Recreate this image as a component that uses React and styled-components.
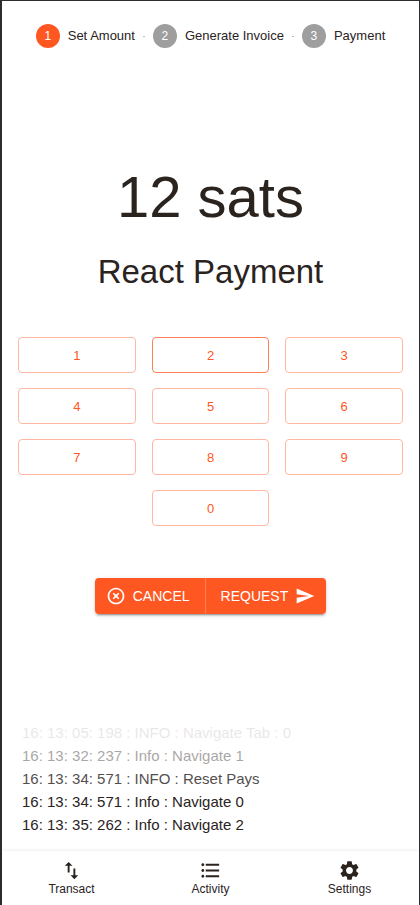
import React, { useState } from "react";
import styled, { createGlobalStyle } from "styled-components";
import {
  MdFormatListBulleted,
  MdHighlightOff,
  MdImportExport,
  MdSend,
  MdSettings,
} from "react-icons/md";

const orange = "#ff5722";
const ink = "#2a231e";

const GlobalStyle = createGlobalStyle`
  *, *::before, *::after { box-sizing: border-box; }
  body {
    margin: 0;
    background: #fff;
    color: ${ink};
    font-family: "Liberation Sans", Arial, sans-serif;
  }
  button { font-family: inherit; cursor: pointer; }
`;

const Screen = styled.div`
  display: flex;
  flex-direction: column;
  min-height: 100vh;
  border: solid #2d2d2f;
  border-width: 1px 1px 0 2px;
`;

const Main = styled.main`
  flex: 1;
  display: flex;
  flex-direction: column;
  padding: 23px 16px 0 16px;
`;

const Stepper = styled.ol`
  display: flex;
  align-items: center;
  justify-content: center;
  margin: 0;
  padding: 0;
  list-style: none;
`;

const Step = styled.li`
  display: flex;
  align-items: center;
  gap: 8px;
  font-size: 13px;
  line-height: 24px;
  white-space: nowrap;

  & + &::before {
    content: "";
    width: 2px;
    height: 1px;
    margin-left: 8px;
    background: #bdbdbd;
  }
`;

const StepNumber = styled.span`
  width: 24px;
  height: 24px;
  border-radius: 50%;
  background: ${({ $active }) => ($active ? orange : "#9e9e9e")};
  color: #fff;
  font-size: 12px;
  text-align: center;
`;

const Summary = styled.header`
  display: flex;
  flex-direction: column;
  align-items: center;
  gap: 21px;
  margin-top: 115px;
`;

const Amount = styled.h1`
  margin: 0;
  font-size: 58px;
  font-weight: 400;
  line-height: 68px;
`;

const Memo = styled.h2`
  margin: 0;
  font-size: 33px;
  font-weight: 400;
  line-height: 40px;
`;

const Keypad = styled.div`
  display: grid;
  grid-template-columns: repeat(3, 1fr);
  gap: 15px 16px;
  margin-top: 45px;
`;

const Key = styled.button`
  height: 36px;
  padding: 0;
  border: 1px solid ${({ $focused }) => ($focused ? "#ff7e57" : "#ffb7a2")};
  border-radius: 4px;
  background: transparent;
  color: ${orange};
  font-size: 13px;

  &:last-child {
    grid-column: 2;
  }
`;

const Actions = styled.div`
  display: flex;
  align-self: center;
  margin-top: 52px;
  border-radius: 4px;
  box-shadow: 0 3px 1px -2px rgba(0, 0, 0, 0.2),
    0 2px 2px rgba(0, 0, 0, 0.14), 0 1px 5px rgba(0, 0, 0, 0.12);
`;

const Action = styled.button`
  display: flex;
  align-items: center;
  gap: 7px;
  height: 36px;
  padding: 0 ${({ $last }) => ($last ? "11px 0 15px" : "15px 0 11px")};
  border: 0;
  border-radius: ${({ $last }) => ($last ? "0 4px 4px 0" : "4px 0 0 4px")};
  background: ${orange};
  color: #fff;
  font-size: 14px;
  text-transform: uppercase;

  & + & {
    border-left: 1px solid #ff7f57;
  }

  svg {
    width: 20px;
    height: 20px;
  }
`;

const Log = styled.ul`
  margin: auto 4px 15px;
  padding: 0;
  list-style: none;
  font-size: 15px;
  line-height: 23px;
`;

const LogLine = styled.li`
  opacity: ${({ $opacity }) => $opacity};
`;

const BottomNav = styled.nav`
  display: grid;
  grid-template-columns: repeat(3, 1fr);
  height: 54px;
  box-shadow: 0 0 4px rgba(0, 0, 0, 0.1);
`;

const NavItem = styled.button`
  display: flex;
  flex-direction: column;
  align-items: center;
  justify-content: center;
  padding: 0 0 1px;
  border: 0;
  background: transparent;
  color: ${ink};
  font-size: 12px;
  line-height: 14px;

  svg {
    width: 23px;
    height: 23px;
  }
`;

const steps = ["Set Amount", "Generate Invoice", "Payment"];
const digits = [1, 2, 3, 4, 5, 6, 7, 8, 9, 0];
const logLines = [
  { text: "16: 13: 05: 198 : INFO : Navigate Tab : 0", opacity: 0.1 },
  { text: "16: 13: 32: 237 : Info : Navigate 1", opacity: 0.4 },
  { text: "16: 13: 34: 571 : INFO : Reset Pays", opacity: 0.8 },
  { text: "16: 13: 34: 571 : Info : Navigate 0", opacity: 1 },
  { text: "16: 13: 35: 262 : Info : Navigate 2", opacity: 1 },
];
const tabs = [
  { label: "Transact", Icon: MdImportExport },
  { label: "Activity", Icon: MdFormatListBulleted },
  { label: "Settings", Icon: MdSettings },
];

export default function App() {
  const [amount, setAmount] = useState("12");
  const [lastKey, setLastKey] = useState(2);

  const press = (digit) => {
    setAmount((value) => value === "0" ? String(digit) : `${value}${digit}`);
    setLastKey(digit);
  };

  return (
    <>
      <GlobalStyle />
      <Screen>
        <Main>
          <Stepper>
            {steps.map((label, index) => (
              <Step key={label} aria-current={index === 0 ? "step" : undefined}>
                <StepNumber $active={index === 0}>{index + 1}</StepNumber>
                {label}
              </Step>
            ))}
          </Stepper>
          <Summary>
            <Amount>{amount} sats</Amount>
            <Memo>React Payment</Memo>
          </Summary>
          <Keypad>
            {digits.map((digit) => (
              <Key
                key={digit}
                type="button"
                $focused={digit === lastKey}
                onClick={() => press(digit)}
              >
                {digit}
              </Key>
            ))}
          </Keypad>
          <Actions>
            <Action type="button" onClick={() => setAmount("0")}>
              <MdHighlightOff aria-hidden="true" />
              Cancel
            </Action>
            <Action type="button" $last>
              Request
              <MdSend aria-hidden="true" />
            </Action>
          </Actions>
          <Log>
            {logLines.map(({ text, opacity }) => (
              <LogLine key={text} $opacity={opacity}>
                {text}
              </LogLine>
            ))}
          </Log>
        </Main>
        <BottomNav>
          {tabs.map(({ label, Icon }) => (
            <NavItem key={label} type="button">
              <Icon aria-hidden="true" />
              {label}
            </NavItem>
          ))}
        </BottomNav>
      </Screen>
    </>
  );
}
